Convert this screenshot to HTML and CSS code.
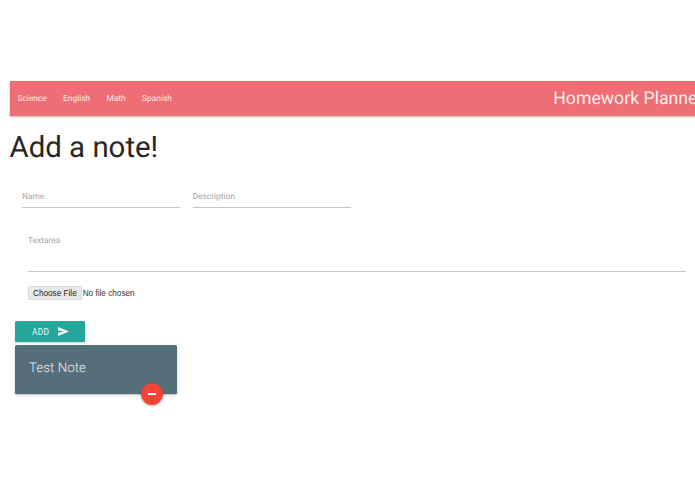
FILE: index.html
```html
<!DOCTYPE html>
<html lang="en">
<head>
<meta charset="utf-8">
<title>Homework Planner</title>
<link rel="stylesheet" href="styles.css">
</head>
<body>
<nav class="nav">
  <ul class="nav-links">
    <li>Science</li>
    <li>English</li>
    <li>Math</li>
    <li>Spanish</li>
  </ul>
  <span class="brand">Homework Planner</span>
</nav>
<h1 class="title">Add a note!</h1>
<form class="form">
  <div class="row">
    <div class="field">Name</div>
    <div class="field">Description</div>
  </div>
  <div class="textarea">Textarea</div>
  <input class="file" type="file">
  <button class="add" type="button">ADD
    <svg class="send" viewBox="0 0 24 20" width="11" height="9"><path d="M0 20 24 10 0 0v7.5l14 2.5-14 2.5z" fill="#fff"/></svg>
  </button>
</form>
<div class="card">
  <span class="card-title">Test Note</span>
  <span class="fab"><span class="minus"></span></span>
</div>
</body>
</html>
```
FILE: styles.css
```css
html, body { overflow: hidden; height: 100%; }
body { margin: 0; padding: 81px 0 0 9.5px; box-sizing: border-box; background: #fff; font-family: Roboto, sans-serif; color: #262626; text-rendering: geometricPrecision; }
.nav { box-sizing: border-box; width: 700px; height: 35px; padding-top: 1px; background: #ef6e73; display: flex; align-items: center; justify-content: space-between; box-shadow: 0 1px 2px rgba(0,0,0,.3); color: #fde9ea; }
.nav-links { list-style: none; margin: 0; padding: 0 0 0 8px; display: flex; gap: 16.3px; font-size: 8.4px; }
.brand { font-size: 17.7px; font-weight: 400; color: #fdeeef; white-space: nowrap; margin-right: 6px; }
.title { margin: 13px 0 0; font-size: 29.4px; font-weight: 400; line-height: 38px; }
.form { padding-left: 5.5px; }
.row { display: flex; gap: 12.5px; margin: 18px 0 0 7px; }
.field { width: 158px; height: 22px; border-bottom: 1.5px solid #c6c6c6; font-size: 8.4px; line-height: 24px; color: #a6a6a6; }
.textarea { margin: 23px 0 0 13px; width: 658px; height: 40px; border-bottom: 1.5px solid #c6c6c6; font-size: 8.4px; color: #a6a6a6; line-height: 20px; }
.file { display: block; margin: 14px 0 0 13px; font-family: "Liberation Sans", sans-serif; font-size: 8.2px; height: 15px; color: #333; }
.file::file-selector-button { height: 14px; margin: 0 1px 0 0; padding: 0 4px; background: #e9e9e9; border: 1px solid #dadada; border-radius: 1px; font-size: 8.2px; font-family: "Liberation Sans", sans-serif; color: #222; }
.add { margin: 20px 0 0; display: flex; align-items: center; width: 70px; height: 21px; padding: 0 0 0 17px; gap: 9px; border: 0; border-radius: 1.5px; background: #26a69a; color: #eafaf8; font-family: Roboto, sans-serif; font-size: 8.4px; letter-spacing: .3px; box-shadow: 0 1px 2px rgba(0,0,0,.2); }
.send { flex: none; }
.card { position: relative; margin: 3px 0 0 5.5px; width: 162px; height: 49px; background: #546e7a; border-radius: 1.5px; box-shadow: 0 1px 2px rgba(0,0,0,.3); color: #eceff1; }
.card-title { display: block; padding: 15px 0 0 14px; font-size: 13.4px; font-weight: 300; line-height: 17px; }
.fab { position: absolute; left: 126px; top: 38px; width: 22px; height: 22px; border-radius: 50%; background: #f44336; box-shadow: 0 1px 3px rgba(0,0,0,.25); display: flex; align-items: center; justify-content: center; }
.minus { width: 8px; height: 1.5px; background: #fff; }
```
